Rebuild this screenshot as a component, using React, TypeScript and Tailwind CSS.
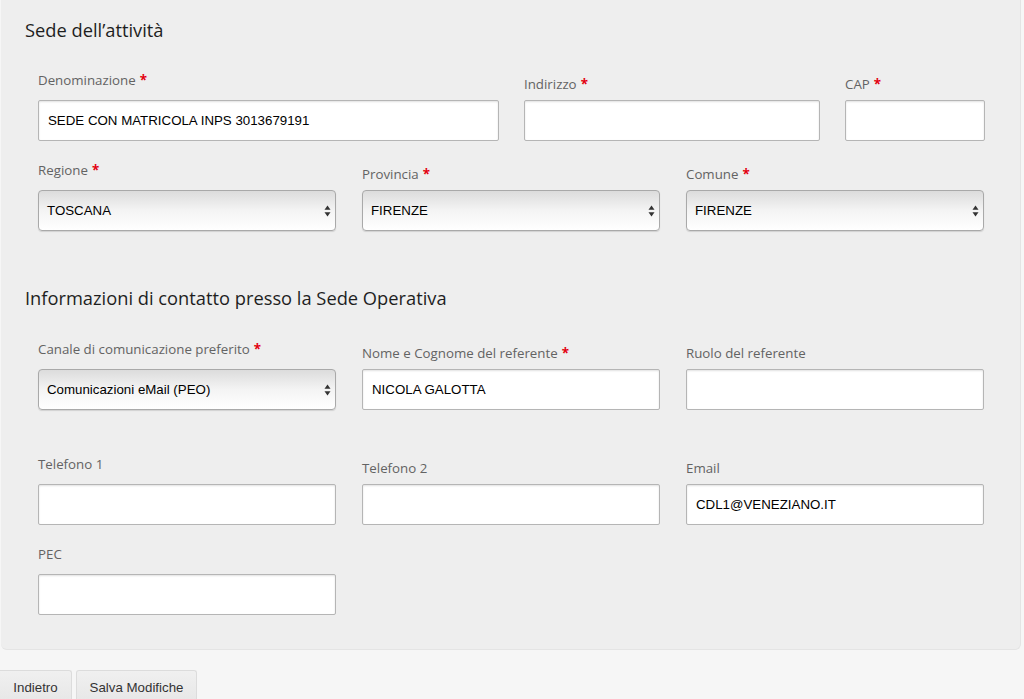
import React from "react";

const labelFont = { fontFamily: '"Open Sans", "DejaVu Sans", sans-serif' };

function Star() {
  return <span className="text-[#e3000f] font-bold ml-[4px]">*</span>;
}

function Label({ text, required, first }: { text: string; required?: boolean; first?: boolean }) {
  return (
    <div
      className={`text-[13.3px] leading-[20px] text-[#636363] ${first ? "mb-[10px]" : "mb-[6px]"}`}
      style={labelFont}
    >
      {text}
      {required && <Star />}
    </div>
  );
}

function TextInput({ value }: { value?: string }) {
  return (
    <div className="h-[41px] w-full bg-white border border-[#b5b5b5] rounded-[2px] shadow-[inset_0_1px_2px_rgba(0,0,0,0.12)] flex items-center px-[9px] text-[13.3px] text-black font-['Liberation_Sans',Arial,sans-serif]">
      {value}
    </div>
  );
}

function Arrows() {
  return (
    <svg width="7" height="12" viewBox="0 0 7 12">
      <path d="M3.5 0.5 L6.5 4.8 L0.5 4.8 Z" fill="#333" />
      <path d="M3.5 11.5 L6.5 7.2 L0.5 7.2 Z" fill="#333" />
    </svg>
  );
}

function Select({ value }: { value: string }) {
  return (
    <div className="h-[41px] w-full border border-[#a9a9a9] rounded-[4px] bg-gradient-to-b from-[#dcdcdc] via-[#f4f4f4] to-white shadow-[0_1px_1px_rgba(0,0,0,0.12)] flex items-center justify-between pl-[8px] pr-[4px] text-[13.3px] text-black font-['Liberation_Sans',Arial,sans-serif]">
      <span>{value}</span>
      <Arrows />
    </div>
  );
}

function Field({
  label,
  required,
  first,
  value,
  select,
}: {
  label: string;
  required?: boolean;
  first?: boolean;
  value?: string;
  select?: boolean;
}) {
  return (
    <div className="flex flex-col">
      <Label text={label} required={required} first={first} />
      {select ? <Select value={value || ""} /> : <TextInput value={value} />}
    </div>
  );
}

function Title({ children }: { children: React.ReactNode }) {
  return (
    <h2 className="text-[18.3px] leading-[26px] text-[#1e1e1e]" style={labelFont}>
      {children}
    </h2>
  );
}

export default function App() {
  return (
    <div className="w-[1024px] h-[699px] overflow-hidden bg-[#f6f6f6]">
      <div className="ml-[1px] w-[1020px] bg-[#eeeeee] rounded-b-[6px] border-r border-b border-[#e4e4e4] px-[24px] pt-[17px] pb-[34px]">
        <Title>Sede dell’attività</Title>
        <div className="pl-[13px] mt-[27px]">
          <div className="grid grid-cols-[461px_296px_140px] gap-x-[25px] items-end">
            <Field label="Denominazione" required first value="SEDE CON MATRICOLA INPS 3013679191" />
            <Field label="Indirizzo" required />
            <Field label="CAP" required />
          </div>
          <div className="grid grid-cols-[298px_298px_298px] gap-x-[26px] items-end mt-[19px]">
            <Field label="Regione" required first select value="TOSCANA" />
            <Field label="Provincia" required select value="FIRENZE" />
            <Field label="Comune" required select value="FIRENZE" />
          </div>
        </div>

        <div className="mt-[54px]">
          <Title>Informazioni di contatto presso la Sede Operativa</Title>
        </div>
        <div className="pl-[13px] mt-[28px]">
          <div className="grid grid-cols-[298px_298px_298px] gap-x-[26px] items-end">
            <Field label="Canale di comunicazione preferito" required first select value="Comunicazioni eMail (PEO)" />
            <Field label="Nome e Cognome del referente" required value="NICOLA GALOTTA" />
            <Field label="Ruolo del referente" />
          </div>
          <div className="grid grid-cols-[298px_298px_298px] gap-x-[26px] items-end mt-[44px]">
            <Field label="Telefono 1" first />
            <Field label="Telefono 2" />
            <Field label="Email" value="CDL1@VENEZIANO.IT" />
          </div>
          <div className="grid grid-cols-[298px_298px_298px] gap-x-[26px] items-end mt-[19px]">
            <Field label="PEC" first />
          </div>
        </div>
      </div>

      <div className="mt-[20px] flex gap-[4px] text-[13.3px] text-[#333] font-['Liberation_Sans',Arial,sans-serif]">
        <button className="h-[36px] w-[72px] bg-gradient-to-b from-[#f0f0f0] to-[#e6e6e6] border-r border-t border-[#dcdcdc] rounded-tr-[3px] pb-[1px]">
          Indietro
        </button>
        <button className="h-[36px] w-[121px] bg-gradient-to-b from-[#f0f0f0] to-[#e6e6e6] border border-b-0 border-[#dcdcdc] rounded-t-[3px] pb-[1px]">
          Salva Modifiche
        </button>
      </div>
    </div>
  );
}
